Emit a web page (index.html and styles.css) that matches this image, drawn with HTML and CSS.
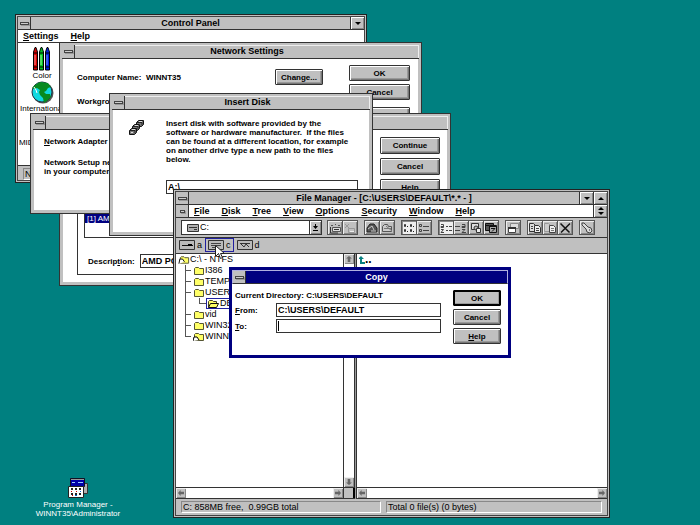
FILE: index.html
```html
<!DOCTYPE html>
<html lang="en">
<head>
<meta charset="utf-8">
<title>Desktop</title>
<link rel="stylesheet" href="styles.css">
</head>
<body>
<main class="desktop">

<section class="window framed control-panel">
  <header class="titlebar"><button class="sysbox" aria-label="System menu"><i></i></button><h1>Control Panel</h1><button class="sizer" aria-label="Minimize"><i class="tri down"></i></button></header>
  <nav class="menubar"><a href="#"><u>S</u>ettings</a><a href="#"><u>H</u>elp</a></nav>
  <div class="cp-icons">
    <figure>
      <svg width="20" height="24" viewBox="0 0 20 24"><g stroke="#000" stroke-width="1"><path fill="#d80000" d="M1.500 23V5L3 .5h1L5.500 5v18z"/><path fill="#00c020" d="M7.500 23V5L9 .5h1L11.500 5v18z"/><path fill="#0020e0" d="M13.500 23V5L15 .5h1L17.500 5v18z"/></g><path d="M1 6h5M7 6h5M13 6h5M1 20h5M7 20h5M13 20h5" stroke="#000"/><path d="M3 8v10" stroke="#ff9090"/><path d="M9 8v10" stroke="#a0ffa0"/><path d="M15 8v10" stroke="#7090ff"/></svg>
      <figcaption>Color</figcaption>
    </figure>
    <figure>
      <svg width="23" height="23" viewBox="0 0 23 23"><circle cx="12" cy="12" r="10.500" fill="#555"/><circle cx="11" cy="11" r="10" fill="#10d8e0" stroke="#234"/><path fill="#078a20" d="M4 4l5-3 8 1 3 4-3 1-2 3-2 1 2 2 4 0 1 3-4 4-3 2-1-5-3-3-1-3 1-2-3-2-3 1-2-1z"/><path d="M3 6l2 3 1 3" stroke="#fff" fill="none"/></svg>
      <figcaption>International</figcaption>
    </figure>
    <figure class="midi"><figcaption>MIDI Mapper</figcaption></figure>
  </div>
  <footer class="cp-status"><span>N</span></footer>
</section>

<section class="window dialog network">
  <header class="titlebar"><button class="sysbox" aria-label="System menu"><i></i></button><h1>Network Settings</h1></header>
  <div class="net-body">
    <div class="net-main">
      <div class="net-row"><span>Computer Name:&nbsp; WINNT35</span><button class="btn">Change...</button></div>
      <div class="net-row">Workgroup:</div>
      <div class="net-group">
        <div class="net-list"><span>[1] AMD</span></div>
        <div class="net-desc"><label for="desc">Descrip<u>t</u>ion:</label><input id="desc" value="AMD PCNET" readonly></div>
      </div>
    </div>
    <div class="buttons"><button class="btn">OK</button><button class="btn">Cancel</button><button class="btn">Configure</button></div>
  </div>
</section>

<section class="window dialog adapter">
  <header class="titlebar"><button class="sysbox" aria-label="System menu"><i></i></button><h1></h1></header>
  <div class="ad-body">
    <div class="ad-text"><p><u>N</u>etwork Adapter</p><p>Network Setup needs<br>in your computer</p></div>
    <div class="buttons"><button class="btn">Continue</button><button class="btn">Cancel</button><button class="btn">Help</button></div>
  </div>
</section>

<section class="window dialog insert">
  <header class="titlebar"><button class="sysbox" aria-label="System menu"><i></i></button><h1>Insert Disk</h1></header>
  <div class="in-body">
    <svg width="17" height="17" viewBox="0 0 17 17"><defs><g id="floppy"><path d="M.5 3.500l2-2h5v4l-2 2h-5z" fill="#777" stroke="#111"/><path d="M3 2.500h3M2 5.500h2" stroke="#ddd"/><path d="M1 3.500h5v3" stroke="#222" fill="none"/></g></defs><use href="#floppy" x="8"/><use href="#floppy" x="4" y="4"/><use href="#floppy" x="1" y="8"/></svg>
    <div class="in-form">
      <label for="path">Insert disk with software provided by the<br>software or hardware manufacturer.&nbsp; If the files<br>can be found at a different location, for example<br>on another drive type a new path to the files<br>below.</label>
      <input id="path" value="A:\">
    </div>
  </div>
</section>

<section class="window framed file-manager">
  <header class="titlebar"><button class="sysbox" aria-label="System menu"><i></i></button><h1>File Manager - [C:\USERS\DEFAULT\*.* - ]</h1><button class="sizer" aria-label="Minimize"><i class="tri down"></i></button><button class="sizer" aria-label="Maximize"><i class="tri up"></i></button></header>
  <nav class="menubar"><button class="sysbox small" aria-label="Document menu"><i></i></button><a href="#"><u>F</u>ile</a><a href="#"><u>D</u>isk</a><a href="#"><u>T</u>ree</a><a href="#"><u>V</u>iew</a><a href="#"><u>O</u>ptions</a><a href="#"><u>S</u>ecurity</a><a href="#"><u>W</u>indow</a><a href="#"><u>H</u>elp</a><button class="sizer restore" aria-label="Restore"><i class="tri up"></i><i class="tri down"></i></button></nav>
  <div class="toolbar">
    <div class="combo"><svg width="12" height="8" viewBox="0 0 12 8"><path d="M.5.5h11v7H.5z" fill="#b0b0b0" stroke="#333"/><path d="M2 3.500h8M7 5.500h3" stroke="#333"/></svg><select aria-label="Drive"><option>C:</option></select><span class="drop"><svg width="7" height="8" viewBox="0 0 7 8"><path d="M3 0h1v2h2L3.500 5 1 2h2zM1 6h5v1H1z"/></svg></span></div>
    <div class="tools">
      <div class="group">
        <button aria-label="Connect drive"><svg viewBox="0 0 12 12"><path d="M2 3.500h2M6 2.500h1M9 3.500h2M3.500 5.500h8v4h-8z" fill="#ddd" stroke="#555"/><path d="M5 7.500h5M1.500 5v6H9" stroke="#333" fill="none"/></svg></button>
        <button class="off" aria-label="Disconnect drive"><svg viewBox="0 0 12 12"><path d="M1 2l4 4m0-4L1 6M4.500 6.500h6v4h-6z" stroke="#999" fill="none"/><path d="M6 9.500h4" stroke="#eee"/></svg></button>
      </div>
      <div class="group">
        <button aria-label="Share directory"><svg viewBox="0 0 12 12"><path d="M1 6l3-4h4l3 4v4H1z" fill="#555" stroke="#222"/><path d="M2 7l4-3 2 4M5 9h5" stroke="#ccc" fill="none"/></svg></button>
        <button aria-label="Stop sharing"><svg viewBox="0 0 12 12"><path d="M1.500 9.500v-5l2-2h3l1 2h3v5z" fill="#ccc" stroke="#555"/><path d="M3 6.500h7M5 4l6 5" stroke="#777"/></svg></button>
      </div>
      <div class="group">
        <button class="on" aria-label="View names"><svg viewBox="0 0 12 12"><path d="M1.500 2.500h1v2h-1zM1.500 7.500h1v2h-1zM7.500 2.500h1v2h-1zM7.500 7.500h1v2h-1z" fill="none" stroke="#333"/><path d="M4 4.500h1M10 4.500h1M4 9.500h1M10 9.500h1" stroke="#222"/></svg></button>
        <button aria-label="View details"><svg viewBox="0 0 12 12"><path d="M1.500 2.500h2v2h-2zM1.500 7.500h2v2h-2z" fill="none" stroke="#444"/><path d="M5 4.500h6M5 8.500h6" stroke="#444"/></svg></button>
      </div>
      <div class="group">
        <button class="on" aria-label="Sort by name"><svg viewBox="0 0 12 12"><path d="M1 2.500h2.500v3H1v-1h2M1 7.500h2.500L1 10.500h3M6 4.500h2M9 4.500h3M6 8.500h2M9 8.500h3" fill="none" stroke="#444"/></svg></button>
        <button aria-label="Sort by type"><svg viewBox="0 0 12 12"><path d="M0 4.500h5M0 8.500h5M7 2.500h3v3H7v-1h3M7 7.500h3l-3 3h4" fill="none" stroke="#444"/></svg></button>
        <button aria-label="Sort by size"><svg viewBox="0 0 12 12"><path d="M1.500 1.500h7v6h-7z" fill="#ddd" stroke="#333"/><circle cx="6" cy="6" r="2" fill="#bbb" stroke="#333"/><path d="M6.500 6.500h4v4h-4z" fill="#eee" stroke="#333"/></svg></button>
        <button aria-label="Sort by date"><svg viewBox="0 0 12 12"><path d="M.5 1.500h8v7h-8z" fill="#555" stroke="#111"/><path d="M4.500 3.500h7v7h-7z" fill="#aaa" stroke="#111"/><path d="M4 4.500h8M6 6.500h4l-3 3M1 3.500h3" stroke="#111" fill="none"/></svg></button>
      </div>
      <div class="group">
        <button aria-label="New window"><svg viewBox="0 0 12 12"><path d="M3.500 1.500h8v5h-8z" fill="#ddd" stroke="#888"/><path d="M1.500 5.500h7v5h-7z" fill="#fff" stroke="#444"/><path d="M1 6h8" stroke="#333" stroke-width="2"/></svg></button>
      </div>
      <div class="group">
        <button aria-label="Copy"><svg viewBox="0 0 12 12"><path d="M.5 1.500h4l2 2v6h-6z" fill="#ddd" stroke="#333"/><path d="M5.500 3.500h4l2 2v5h-6z" fill="#eee" stroke="#333"/><path d="M7 6.500h3M7 8.500h3M2 4.500h2M2 6.500h2" stroke="#444"/></svg></button>
        <button aria-label="Move"><svg viewBox="0 0 12 12"><path d="M.5 1.500h4l2 2v6h-6z" fill="#ccc" stroke="#999"/><path d="M5.500 3.500h4l2 2v5h-6z" fill="#eee" stroke="#444"/><path d="M7 6.500h3M7 8.500h3" stroke="#777"/></svg></button>
        <button aria-label="Delete"><svg viewBox="0 0 12 12"><path d="M1.500 1.500l9 9M11 1.500l-9 9" stroke="#111" stroke-width="1.500"/></svg></button>
      </div>
      <div class="group">
        <button aria-label="Permissions"><svg viewBox="0 0 12 12"><path d="M1 1l2 0 4 4 3 1 1 3-2 2-3-1-1-3-4-4z" fill="#ddd" stroke="#444"/><path d="M8 8h1" stroke="#222"/></svg></button>
      </div>
    </div>
  </div>
  <div class="drives">
    <button><svg width="16" height="10" viewBox="0 0 16 10"><path d="M.5.500h15v9H.500z" fill="#bbb" stroke="#333"/><path d="M3 5.500h6M13 5.500h1" stroke="#111"/><path d="M9 4h4v2H9z"/></svg>a</button>
    <button class="sel"><svg width="16" height="10" viewBox="0 0 16 10"><path d="M.5.500h15v9H.500z" fill="#bbb" stroke="#333"/><path d="M3 3.500h10M3 5.500h10M4 7.500h3" stroke="#444"/></svg>c</button>
    <button><svg width="16" height="10" viewBox="0 0 16 10"><path d="M.5.500h15v9H.500z" fill="#bbb" stroke="#333"/><path d="M3 3.500h10M4 4l3 3 2-3 3 3" stroke="#333" fill="none"/></svg>d</button>
  </div>
  <div class="panes">
    <div class="pane tree-pane">
      <div class="pane-view">
        <ul class="tree">
          <li class="root"><svg class="folder" viewBox="0 0 13 10"><path d="M2.500 8.500v-6l1-1h3l1 1h4v6z" fill="#ff6" stroke="#553"/><path d="M1 9l1-5h3l2 3" fill="#fff" stroke="#000"/></svg>C:\ - NTFS</li>
          <li><svg class="folder"><use href="#closed"/></svg>I386</li>
          <li><svg class="folder"><use href="#closed"/></svg>TEMP</li>
          <li><svg class="folder"><use href="#closed"/></svg>USERS</li>
          <li class="child"><span><svg class="folder" viewBox="0 0 12 10"><path d="M1.500 8.500v-6l1-1h3l1 1h3v2" fill="#ff6" stroke="#442"/><path d="M1.500 8.500l2-4h8l-2 4z" fill="#ff6" stroke="#111"/></svg>DEFAULT</span></li>
          <li><svg class="folder"><use href="#closed"/></svg>vid</li>
          <li><svg class="folder"><use href="#closed"/></svg>WIN32</li>
          <li><svg class="folder" viewBox="0 0 12 10"><path d="M1.500 8.500v-6l1-1h3l1 1h4v6z" fill="#ff6" stroke="#553"/><path d="M0 9l1-4h3l2 3" fill="#fff" stroke="#000"/></svg>WINNT</li>
        </ul>
        <div class="vscroll"><button aria-label="Up"><svg viewBox="0 0 7 7"><use href="#up"/></svg></button><button aria-label="Down"><svg viewBox="0 0 7 7"><use href="#down"/></svg></button></div>
      </div>
      <div class="hscroll"><button aria-label="Left"><svg viewBox="0 0 7 7"><use href="#left"/></svg></button><button aria-label="Right"><svg viewBox="0 0 7 7"><use href="#right"/></svg></button><span></span></div>
    </div>
    <div class="pane list-pane">
      <div class="pane-view"><p class="updir"><svg width="6" height="8" viewBox="0 0 6 8"><path d="M2 0l3 3H3v3h3v2H1V3H-1z" fill="#088080"/></svg>..</p></div>
      <div class="hscroll"><button aria-label="Left"><svg viewBox="0 0 7 7"><use href="#left"/></svg></button><button aria-label="Right"><svg viewBox="0 0 7 7"><use href="#right"/></svg></button></div>
    </div>
  </div>
  <footer class="statusbar"><span>C: 858MB free,&nbsp; 0.99GB total</span><span>Total 0 file(s) (0 bytes)</span></footer>
</section>

<section class="window copy">
  <header class="titlebar"><button class="sysbox" aria-label="System menu"><i></i></button><h1>Copy</h1></header>
  <form class="copy-body">
    <div class="copy-form">
      <p>Current Directory: C:\USERS\DEFAULT</p>
      <div class="field"><label for="from"><u>F</u>rom:</label><input id="from" value="C:\USERS\DEFAULT"></div>
      <div class="field"><label for="to"><u>T</u>o:</label><span class="edit"><input id="to"><i class="caret"></i></span></div>
    </div>
    <div class="buttons"><button type="button" class="btn default">OK</button><button type="button" class="btn">Cancel</button><button type="button" class="btn"><u>H</u>elp</button></div>
  </form>
</section>

<a class="shortcut" href="#">
  <svg width="22" height="22" viewBox="0 0 22 22"><path d="M13.500 6.500h7v10h-7z" fill="#b0b0b0" stroke="#333"/><path d="M3.500 1.500h14v8h-14z" fill="#0000a8" stroke="#112"/><path d="M4 2.500h13" stroke="#999"/><path d="M5 5.500h3M11 5.500h5" stroke="#9cf"/><path d="M1.500 9.500h15v11h-15z" fill="#fff" stroke="#222"/><path d="M4 12h2m2 0h2m2 0h2M4 17h2m2 0h2m2 0h2" stroke="#222" stroke-width="2"/><path d="M4 14.500h1m4 0h1M5 18.500h1" stroke="#c00"/><path d="M8 18.500h2m3-4h1" stroke="#06c"/></svg>
  <span>Program Manager -<br>WINNT35\Administrator</span>
</a>

<svg class="cursor" width="10" height="15" viewBox="0 0 10 15"><path d="M.5.500v11l3-3 2 5 2-1-2-4h4z" fill="#fff" stroke="#222"/></svg>

<svg class="defs" aria-hidden="true"><defs>
  <g id="closed"><path d="M1.500 8.500v-6l1-1h3l1 1h4v6z" fill="#ff6" stroke="#553"/></g>
  <path id="left" d="M3 0v2h4v3H3v2L0 3.500z" fill="#666"/>
  <path id="right" d="M4 0v2H0v3h4v2l3-3.500z" fill="#666"/>
  <path id="up" d="M0 3h2v4h3V3h2L3.500 0z" fill="#666"/>
  <path id="down" d="M0 4h2V0h3v4h2L3.500 7z" fill="#666"/>
</defs></svg>
</main>
</body>
</html>
```
FILE: styles.css
```css
* { box-sizing: border-box; }
body { margin: 0; }
button, input, select { font: inherit; color: inherit; margin: 0; padding: 0; border: 0; border-radius: 0; }
h1, p, ul, figure { margin: 0; padding: 0; font: inherit; }
a { color: inherit; text-decoration: none; }
i { font-style: normal; }
svg { display: block; flex: none; }

.desktop {
  position: relative;
  min-height: 100vh;
  overflow: hidden;
  background: #008080;
  color: #000;
  font: bold 8px/9px "Liberation Sans", sans-serif;
}

/* Windows */
.window { position: absolute; display: flex; flex-direction: column; background: #fff; }
.framed { border: 1px solid #222; outline: 1px solid #444; outline-offset: -3px; padding: 2px; background: #c0c0c0; }
.dialog { border: 1px solid #333; padding: 2px; background: #fff; box-shadow: inset 0 0 0 3px #c0c0c0; }
.control-panel { left: 15px; top: 14px; width: 352px; height: 169px; }
.network { left: 59px; top: 42px; width: 363px; height: 244px; }
.adapter { left: 30px; top: 113px; width: 421px; height: 101px; }
.insert { left: 109px; top: 93px; width: 264px; height: 143px; }
.file-manager { left: 173px; top: 189px; width: 437px; height: 329px; }
.copy { left: 229px; top: 267px; width: 282px; height: 91px; border: 3px solid #000080; }

.titlebar { display: flex; flex: none; height: 13px; background: #c0c0c0; border-bottom: 1px solid #333; }
.dialog .titlebar { height: 14px; box-shadow: inset 0 1px #eee, inset -1px 0 #eee; }
.titlebar h1 { flex: 1; text-align: center; font: bold 9px/13px "Liberation Sans", sans-serif; }
.sysbox { display: flex; align-items: center; justify-content: center; width: 13px; background: #c0c0c0; border-right: 1px solid #333; }
.sysbox i { width: 9px; height: 3px; background: #ccc; border: 1px solid #444; box-shadow: 1px 1px #999; }
.sysbox.small i { width: 5px; }
.sizer { display: flex; flex-direction: column; align-items: center; justify-content: center; gap: 2px; width: 14px; background: #c0c0c0; border-left: 1px solid #333; box-shadow: inset 1px 1px #fff, inset -1px -1px #888; }
.tri { border: 3px solid transparent; }
.tri.down { border-top-color: #000; border-bottom: 0; }
.tri.up { border-bottom-color: #000; border-top: 0; }

.menubar { display: flex; flex: none; height: 13px; background: #fff; border-bottom: 1px solid #333; font: bold 9px/13px "Liberation Sans", sans-serif; }
.menubar a { margin-right: 12px; }
.menubar .sysbox { margin-right: 5px; }
.menubar .restore { margin-left: auto; }

.btn { height: 17px; background: #c0c0c0; border: 1px solid #333; border-radius: 1px; box-shadow: inset 1px 1px #fff, inset -1px -1px #777, inset -2px -2px #999; line-height: 13px; text-align: center; white-space: nowrap; overflow: hidden; }
.btn.default { border-color: #000; outline: 1px solid #000; outline-offset: -2px; }
.buttons { display: flex; flex-direction: column; flex: none; }

input { background: #fff; border: 1px solid #333; padding: 0 1px; font-size: 9px; }

/* Control Panel */
.control-panel .menubar { padding-left: 5px; }
.cp-icons { flex: 1; display: flex; flex-direction: column; align-items: flex-start; gap: 1px; padding-top: 4px; background: #fff; font: 8px/9px "Liberation Sans", sans-serif; }
.cp-icons figure { display: flex; flex-direction: column; align-items: center; width: 48px; white-space: nowrap; }
.midi { padding-top: 24px; }
.cp-status { flex: none; height: 15px; padding: 2px 5px; background: #c0c0c0; border-top: 1px solid #333; font: 9px/10px "Liberation Sans", sans-serif; }
.cp-status span { display: block; padding-left: 1px; border: 1px solid #888; border-right-color: #fff; border-bottom-color: #fff; }

/* Network Settings */
.net-body { display: flex; flex: 1; padding: 6px 9px 8px 15px; }
.net-main { flex: 1; display: flex; flex-direction: column; }
.net-row { display: flex; align-items: center; justify-content: space-between; height: 24px; padding-right: 26px; }
.net-row .btn { width: 48px; height: 16px; }
.net-group { flex: 1; display: flex; flex-direction: column; gap: 16px; margin: 10px 0 0; padding: 6px; border: 1px solid #333; }
.net-list { flex: 1; display: flex; align-items: flex-end; padding-bottom: 14px; border: 1px solid #333; }
.net-list span { padding: 0 2px; background: #000080; color: #fff; font-weight: normal; }
.net-desc { display: flex; align-items: center; gap: 5px; padding: 0 4px; }
.net-desc input { flex: 1; height: 14px; }
.network .buttons { width: 61px; gap: 3px; }
.network .buttons .btn { height: 16px; }
.network .buttons .btn:last-child { margin-top: 4px; }

/* Adapter dialog */
.ad-body { display: flex; justify-content: space-between; padding: 7px 8px 0 11px; }
.ad-text { display: flex; flex-direction: column; gap: 12px; }
.adapter .buttons { width: 60px; gap: 4px; }

/* Insert Disk */
.in-body { display: flex; gap: 21px; padding: 9px 11px 0 16px; }
.in-form { flex: 1; display: flex; flex-direction: column; gap: 16px; white-space: nowrap; }
.in-form input { width: 192px; height: 14px; }

/* File Manager */
.toolbar { display: flex; flex: none; align-items: center; gap: 5px; height: 20px; padding: 0 5px; background: #c0c0c0; border-bottom: 1px solid #333; }
.combo { display: flex; align-items: center; width: 141px; height: 15px; padding-left: 5px; background: #fff; border: 1px solid #333; font: 9px/11px "Liberation Sans", sans-serif; }
.combo select { flex: 1; height: 13px; padding-left: 1px; appearance: none; background: #fff; }
.drop { display: grid; place-items: center; width: 12px; height: 13px; background: #c0c0c0; border-left: 1px solid #333; box-shadow: inset 1px 1px #fff, inset -1px -1px #888; }
.tools { display: flex; gap: 6px; }
.group { display: flex; border: 1px solid #555; border-right: 0; }
.group button { width: 15px; height: 13px; background: #c0c0c0; border-right: 1px solid #555; box-shadow: inset 1px 1px #eee, inset -1px -1px #888; }
.group button.on { background: #eee; box-shadow: inset 1px 1px #888; }
.group svg { width: 12px; height: 12px; margin: 0 1px; }
.drives { display: flex; flex: none; height: 16px; background: #c0c0c0; border-bottom: 1px solid #333; font: 9px/13px "Liberation Sans", sans-serif; }
.drives button { display: flex; align-items: center; gap: 2px; height: 14px; padding: 0 2px; background: none; border: 1px solid transparent; }
.drives .sel { border-color: #2020a0; }
.panes { display: flex; flex: 1; min-height: 0; background: #999; }
.pane { display: flex; flex-direction: column; background: #fff; }
.tree-pane { width: 179px; }
.list-pane { flex: 1; border-left: 1px solid #333; margin-left: 1px; }
.pane-view { flex: 1; display: flex; min-height: 0; }
.tree { flex: 1; list-style: none; font: 9px/11px "Liberation Sans", sans-serif; }
.tree li { display: flex; align-items: center; height: 11px; margin-left: 9px; background: linear-gradient(#555, #555) 0 0 / 1px 100% no-repeat; white-space: nowrap; }
.tree li::before { content: ""; width: 6px; margin-right: 2px; border-top: 1px solid #555; }
.tree li.root { margin-left: 2px; background: none; }
.tree li.root::before, .tree li.child::before { display: none; }
.tree li.child { padding-left: 15px; background: linear-gradient(#555, #555) 0 0 / 1px 100% no-repeat, linear-gradient(#555, #555) 14px 5px / 7px 1px no-repeat, linear-gradient(#555, #555) 14px 0 / 1px 5px no-repeat; }
.tree li.child span { display: flex; align-items: center; gap: 1px; margin-left: 6px; border: 1px solid #2020a0; height: 11px; line-height: 9px; }
.tree li:last-child { background-size: 1px 6px; }
.folder { width: 12px; height: 10px; }
.vscroll { display: flex; flex-direction: column; justify-content: space-between; width: 12px; border-left: 1px solid #333; border-right: 1px solid #333; }
.vscroll button, .hscroll button { display: grid; place-items: center; width: 10px; height: 10px; background: #c0c0c0; box-shadow: inset 1px 1px #eee, inset -1px -1px #888; }
.vscroll svg, .hscroll svg { width: 6px; height: 6px; }
.hscroll { display: flex; justify-content: space-between; flex: none; height: 12px; border-top: 1px solid #333; border-bottom: 1px solid #333; }
.hscroll button:last-of-type { margin-left: auto; }
.hscroll span { width: 12px; background: #c0c0c0; border-left: 1px solid #333; border-right: 2px solid #000; }
.updir { display: flex; padding: 2px; font: bold 12px/7px "Liberation Sans", sans-serif; }
.statusbar { display: flex; flex: none; gap: 5px; height: 16px; padding: 2px 5px; background: #c0c0c0; font: 9px/11px "Liberation Sans", sans-serif; }
.statusbar span { width: 200px; padding-left: 1px; border: 1px solid #888; border-right-color: #fff; border-bottom-color: #fff; }
.statusbar span:last-child { flex: 1; }

/* Copy dialog */
.copy .titlebar { height: 14px; background: #000080; color: #fff; border: 1px solid #b0b0e0; border-bottom-color: #333; }
.copy-body { display: flex; justify-content: space-between; padding: 6px 7px 0 3px; }
.copy-form { display: flex; flex-direction: column; width: 206px; }
.copy-form p { height: 12px; line-height: 11px; }
.field { display: flex; align-items: center; height: 16px; }
.field label { width: 41px; }
.field > input, .edit { flex: 1; height: 14px; }
.edit { position: relative; display: flex; }
.edit input { flex: 1; }
.caret { position: absolute; left: 2px; top: 2px; width: 1px; height: 10px; background: #000; }
.copy .buttons { width: 48px; gap: 3px; }
.copy .btn { height: 16px; }

/* Desktop items */
.shortcut { position: absolute; left: 40px; top: 477px; width: 76px; display: flex; flex-direction: column; align-items: center; gap: 1px; color: #fff; font: 8px/9px "Liberation Sans", sans-serif; text-align: center; white-space: nowrap; }
.cursor { position: absolute; left: 215px; top: 245px; }
.defs { position: absolute; width: 0; height: 0; }
```
